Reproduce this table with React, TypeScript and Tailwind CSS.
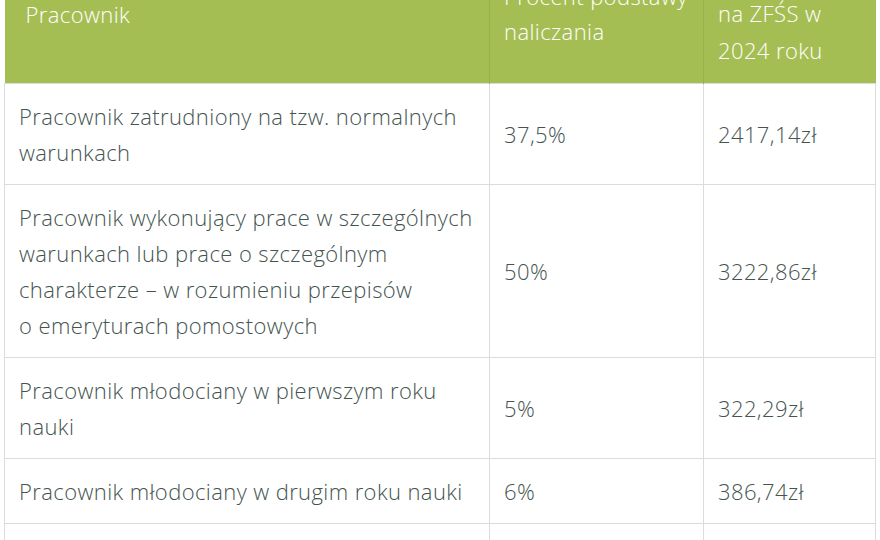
const rows = [
  {
    label: "Pracownik zatrudniony na tzw. normalnych warunkach",
    percent: "37,5%",
    amount: "2417,14zł",
  },
  {
    label:
      "Pracownik wykonujący prace w szczególnych warunkach lub prace o szczególnym charakterze – w rozumieniu przepisów o\u00a0emeryturach pomostowych",
    percent: "50%",
    amount: "3222,86zł",
  },
  {
    label: "Pracownik młodociany w pierwszym roku nauki",
    percent: "5%",
    amount: "322,29zł",
  },
  {
    label: "Pracownik młodociany w drugim roku nauki",
    percent: "6%",
    amount: "386,74zł",
  },
  {
    label: "Pracownik młodociany w trzecim roku nauki",
    percent: "7%",
    amount: "451,20zł",
  },
]

export default function App() {
  return (
    <div className="h-[540px] w-[880px] overflow-hidden bg-white font-['Open_Sans',sans-serif]">
      <table className="-mt-[56px] ml-[4px] w-[871px] table-fixed border-collapse text-[22px] font-light leading-[36px] tracking-[0.4px]">
        <colgroup>
          <col className="w-[485px]" />
          <col className="w-[214px]" />
          <col className="w-[172px]" />
        </colgroup>
        <thead>
          <tr className="bg-[#a5be54] text-left align-middle text-white">
            <th className="border-r border-[#98b14a] py-[14px] pl-[21px] pr-[14px] font-light">
              Pracownik
            </th>
            <th className="border-r border-[#98b14a] px-[14px] py-[14px] font-light leading-[35px]">
              Procent podstawy naliczania
            </th>
            <th className="px-[14px] py-[14px] font-light leading-[37px]">
              Wysokość
              <br />
              na ZFŚS w 2024 roku
            </th>
          </tr>
        </thead>
        <tbody className="text-[#44544f]">
          {rows.map((r) => (
            <tr key={r.label} className="align-middle">
              <td className="border border-[#dcdcdc] py-[14px] pl-[14px] pr-[8px]">
                {r.label}
              </td>
              <td className="border border-[#dcdcdc] px-[14px] py-[14px]">
                {r.percent}
              </td>
              <td className="border border-[#dcdcdc] px-[14px] py-[14px]">
                {r.amount}
              </td>
            </tr>
          ))}
        </tbody>
      </table>
    </div>
  )
}
